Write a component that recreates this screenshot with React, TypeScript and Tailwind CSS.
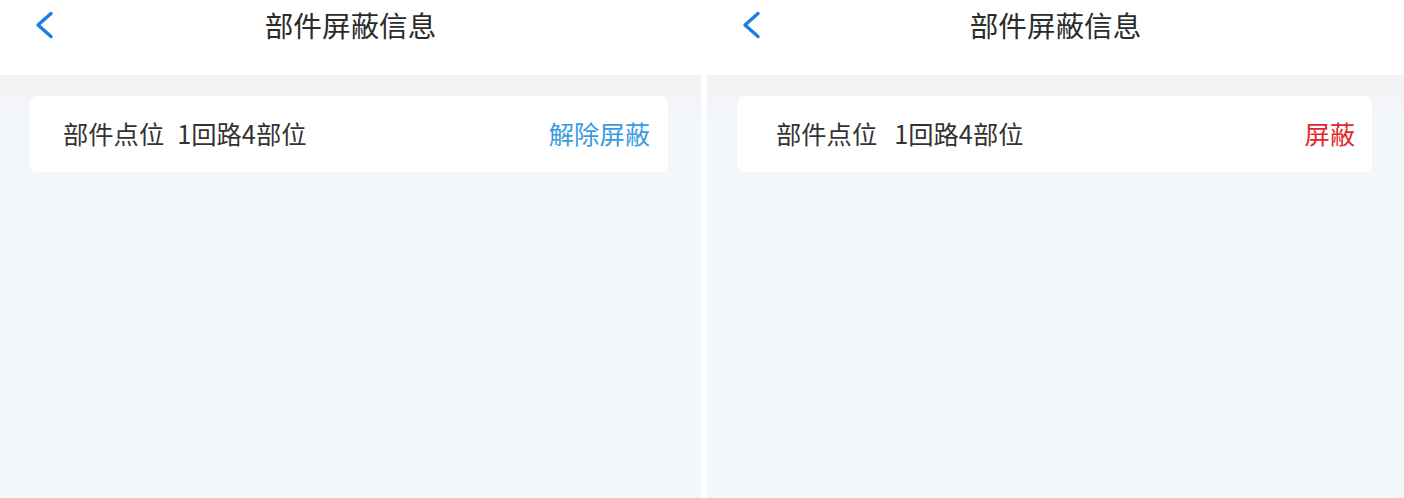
import React from 'react';

type PanelProps = {
  action: string;
  actionClass: string;
  cardClass: string;
  gapClass: string;
};

const BackIcon: React.FC = () => (
  <svg width="22" height="28" viewBox="0 0 22 28" fill="none">
    <polyline
      points="18,2.5 5,14 18,25.5"
      stroke="#1a7ee6"
      strokeWidth="3.4"
      strokeLinecap="round"
      strokeLinejoin="round"
    />
  </svg>
);

const Panel: React.FC<PanelProps> = ({ action, actionClass, cardClass, gapClass }) => (
  <div className="flex flex-col min-w-0">
    {/* Header */}
    <div className="h-[75px] bg-white">
      <div className="relative flex h-[50px] items-center justify-center">
        <button className="absolute left-[33px] top-[11px]">
          <BackIcon />
        </button>
        <span className="text-[28.6px] leading-none text-[#2b2b2b]">部件屏蔽信息</span>
      </div>
    </div>

    {/* Body */}
    <div className="flex-1 bg-gradient-to-b from-[#f1f2f4] via-[#f4f7fa] via-[12%] to-[#f4f7fa] pt-[21px]">
      <div className={`flex h-[76px] items-center justify-between rounded-[8px] bg-white ${cardClass}`}>
        <div className="flex items-center text-[25.3px] leading-none text-[#333333]">
          <span>部件点位</span>
          <span className={gapClass}>1回路4部位</span>
        </div>
        <button className={`text-[25.3px] leading-none ${actionClass}`}>{action}</button>
      </div>
    </div>
  </div>
);

export default function App() {
  return (
    <div
      className="grid h-[498px] w-[1404px] grid-cols-[701px_697px] gap-[6px] bg-white"
      style={{ fontFamily: '"Noto Sans CJK SC", "Noto Sans", sans-serif' }}
    >
      <Panel
        action="解除屏蔽"
        actionClass="text-[#3a9be0]"
        cardClass="ml-[30px] mr-[33px] pl-[33px] pr-[18px]"
        gapClass="ml-[13px]"
      />
      <Panel
        action="屏蔽"
        actionClass="text-[#e0282c]"
        cardClass="ml-[30px] mr-[32px] pl-[39px] pr-[17px]"
        gapClass="ml-[17px]"
      />
    </div>
  );
}
